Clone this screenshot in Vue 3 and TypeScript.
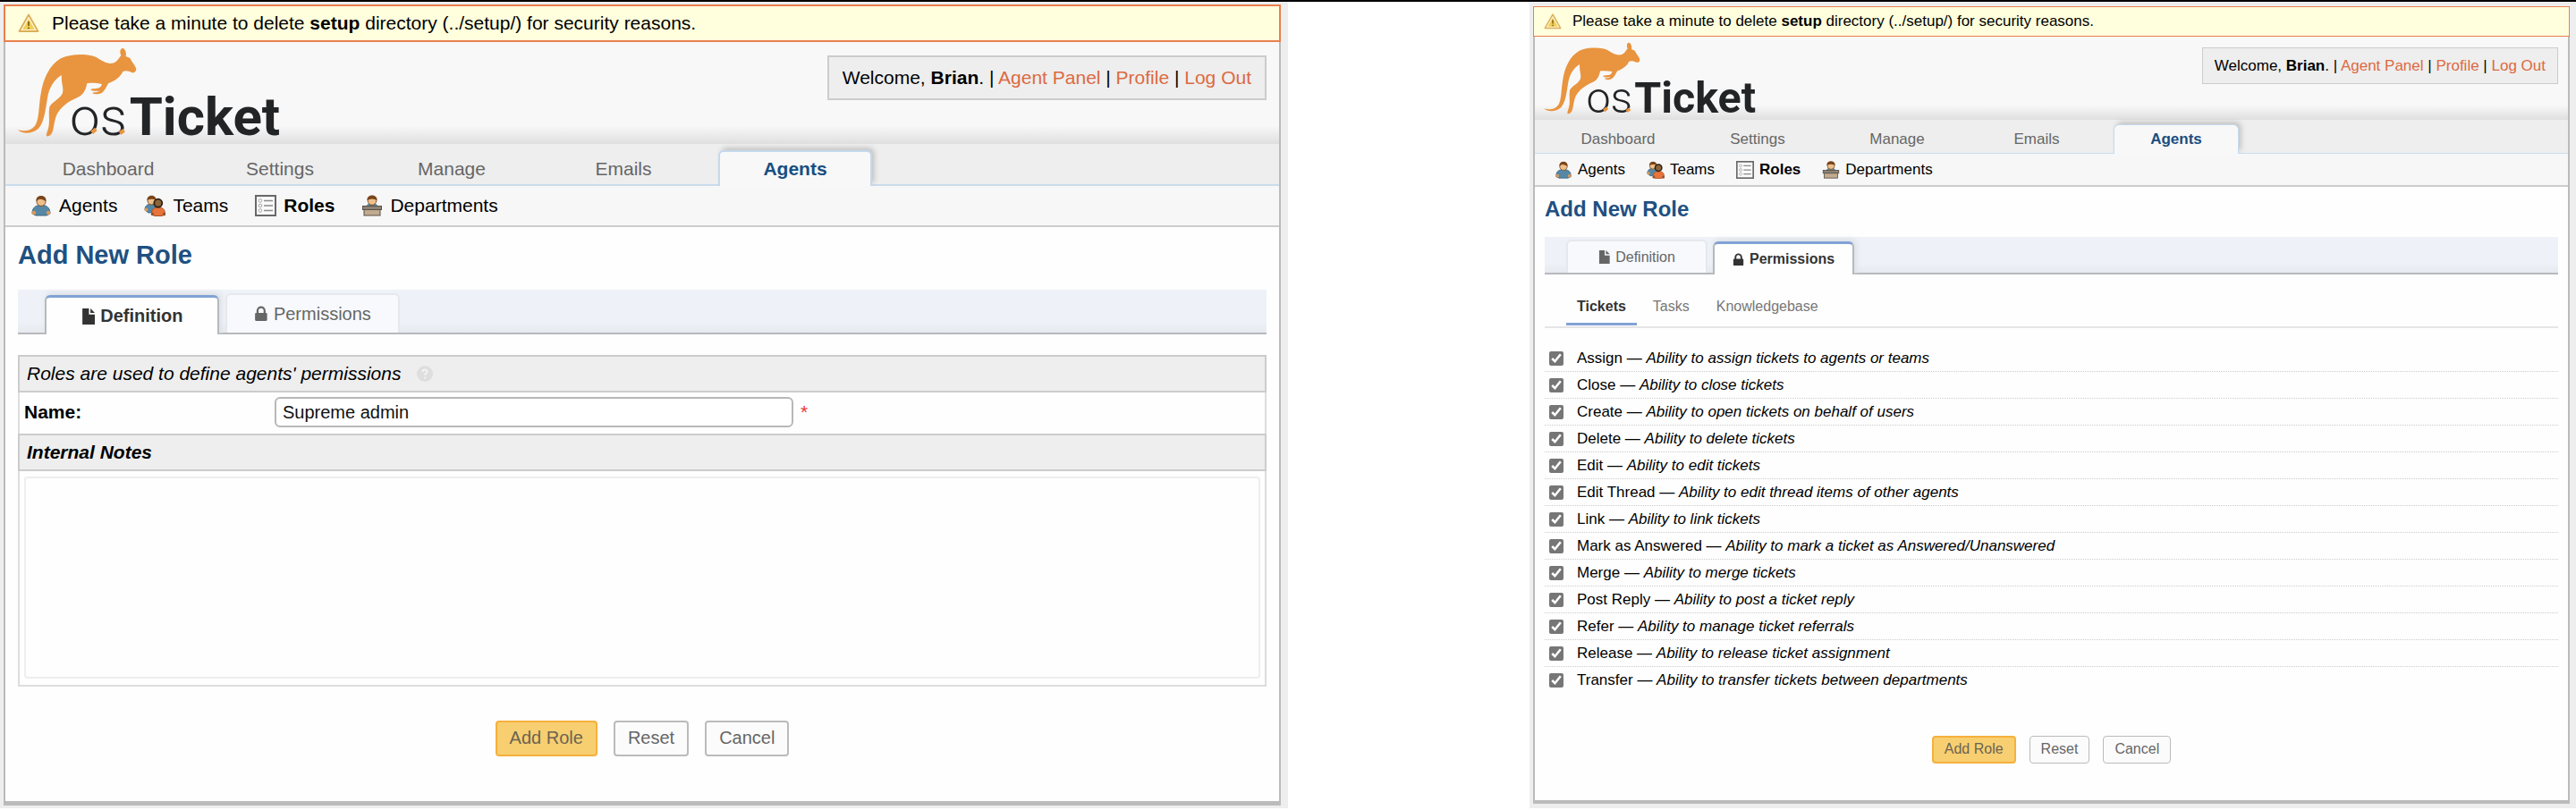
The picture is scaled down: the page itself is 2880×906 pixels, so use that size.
<script setup lang="ts">
import { ref } from 'vue'

type PanelKind = 'definition' | 'permissions'

interface Panel {
  kind: PanelKind
  size: 'large' | 'small'
}

interface Permission {
  id: string
  name: string
  about: string
  granted: boolean
}

const panels: Panel[] = [
  { kind: 'definition', size: 'large' },
  { kind: 'permissions', size: 'small' },
]

const navItems: string[] = ['Dashboard', 'Settings', 'Manage', 'Emails', 'Agents']
const subItems: string[] = ['Agents', 'Teams', 'Roles', 'Departments']
const scopes: string[] = ['Tickets', 'Tasks', 'Knowledgebase']

const roleName = ref('Supreme admin')
const notes = ref('')

const permissions = ref<Permission[]>([
  { id: 'assign', name: 'Assign', about: 'Ability to assign tickets to agents or teams', granted: true },
  { id: 'close', name: 'Close', about: 'Ability to close tickets', granted: true },
  { id: 'create', name: 'Create', about: 'Ability to open tickets on behalf of users', granted: true },
  { id: 'delete', name: 'Delete', about: 'Ability to delete tickets', granted: true },
  { id: 'edit', name: 'Edit', about: 'Ability to edit tickets', granted: true },
  { id: 'thread', name: 'Edit Thread', about: 'Ability to edit thread items of other agents', granted: true },
  { id: 'link', name: 'Link', about: 'Ability to link tickets', granted: true },
  { id: 'answered', name: 'Mark as Answered', about: 'Ability to mark a ticket as Answered/Unanswered', granted: true },
  { id: 'merge', name: 'Merge', about: 'Ability to merge tickets', granted: true },
  { id: 'reply', name: 'Post Reply', about: 'Ability to post a ticket reply', granted: true },
  { id: 'refer', name: 'Refer', about: 'Ability to manage ticket referrals', granted: true },
  { id: 'release', name: 'Release', about: 'Ability to release ticket assignment', granted: true },
  { id: 'transfer', name: 'Transfer', about: 'Ability to transfer tickets between departments', granted: true },
])
</script>

<template>
  <div class="stage">
    <section v-for="panel in panels" :key="panel.kind" class="frame" :class="panel.size">
      <div class="notice">
        <svg class="notice-icon" viewBox="0 0 24 24" aria-hidden="true">
          <path d="M12 2.5 L22.5 21 H1.5 Z" fill="#fff6d8" stroke="#dcae58" stroke-width="1.8" stroke-linejoin="round" />
          <path d="M12 7 L18.800 19 H5.200 Z" fill="#f0cf57" />
          <path d="M12 10 V15 M12 16.500 V18.200" stroke="#8d6f1c" stroke-width="2" />
        </svg>
        <span>Please take a minute to delete <strong>setup</strong> directory (../setup/) for security reasons.</span>
      </div>

      <div class="panel">
        <header class="header">
          <svg class="logo" viewBox="50 40 900 303" role="img" aria-label="osTicket">
            <path
              fill="#e9943f"
              d="M55 317 C80 323 100 320 113 303 C128 282 125 240 133 195 C140 150 160 100 200 77 C240 59 298 62 320 74 C340 87 358 98 378 92 C392 86 395 74 402 68 C396 53 400 44 407 43 C416 44 421 58 418 70 L432 76 C440 92 452 104 453 113 C452 122 445 127 440 125 C427 118 416 117 408 121 C400 140 382 152 360 160 C352 172 350 182 338 192 C326 200 308 197 306 192 C315 190 325 190 330 186 C318 187 302 187 300 181 C310 177 325 180 334 172 L338 163 C320 160 302 158 288 161 C284 180 278 196 262 205 C238 216 212 228 192 256 C178 276 179 300 173 320 C169 335 160 340 152 338 C150 330 158 318 160 300 C163 280 158 260 162 240 C170 222 195 215 205 195 C212 180 200 158 203 133 C180 145 160 175 155 210 C148 250 145 290 125 312 C105 330 72 332 55 317 Z"
            />
            <text class="logo-thin" x="230" y="333">os</text>
            <text class="logo-bold" x="430" y="333">Ticket</text>
            <path d="M304 326 L318 314 M398 328 L412 318" stroke="#e9943f" stroke-width="13" fill="none" />
          </svg>
          <p class="account">
            Welcome, <strong>Brian</strong>. | <a href="#">Agent Panel</a> | <a href="#">Profile</a> |
            <a href="#">Log Out</a>
          </p>
        </header>

        <nav class="nav" aria-label="Main">
          <a v-for="item in navItems" :key="item" href="#" class="nav-item" :class="{ active: item === 'Agents' }">{{ item }}</a>
        </nav>

        <nav class="subnav" aria-label="Agents">
          <a v-for="item in subItems" :key="item" href="#" class="subnav-item" :class="{ active: item === 'Roles' }">
            <svg v-if="item === 'Agents'" class="sub-icon" viewBox="0 0 24 24" aria-hidden="true">
              <path d="M2 21 C2 14 6 11.500 12 11.500 S22 14 22 21 L18 23 H6 Z" fill="#5688a6" stroke="#3d6680" />
              <circle cx="3.800" cy="20" r="2.300" fill="#d99a5b" />
              <circle cx="20.200" cy="20" r="2.300" fill="#d99a5b" />
              <circle cx="12" cy="7.500" r="5" fill="#eebf8c" stroke="#805024" />
              <path d="M6.500 7 C5.500 -1 18.500 -1 17.500 7 C15 6 13 5 11 4.800 C9 5 8 6 6.500 7 Z" fill="#7a4419" />
            </svg>
            <svg v-else-if="item === 'Teams'" class="sub-icon" viewBox="0 0 24 24" aria-hidden="true">
              <path d="M1 17 C1 12 4 10 9 10 S15 13 15 19 L5 20 Z" fill="#5688a6" stroke="#3d6680" />
              <circle cx="2.500" cy="16.500" r="2" fill="#d99a5b" />
              <circle cx="8.500" cy="6.500" r="4.500" fill="#eebf8c" stroke="#805024" />
              <path d="M3.500 6 C3 -1 14 -1 13.500 6 C11 4.500 7 4 3.500 6 Z" fill="#7a4419" />
              <path d="M8.500 22 C8.500 16 11 14 16 14 S23.500 16 23.500 22 L20 23.500 H12 Z" fill="#e8743b" stroke="#b34e20" />
              <circle cx="9.500" cy="21.500" r="1.800" fill="#8a5a33" />
              <circle cx="22.500" cy="21.500" r="1.800" fill="#8a5a33" />
              <circle cx="15.800" cy="9.200" r="4.500" fill="#8c653c" stroke="#2f2012" stroke-width="1.800" />
            </svg>
            <svg v-else-if="item === 'Roles'" class="sub-icon" viewBox="0 0 24 24" aria-hidden="true">
              <rect x="1" y="1" width="22" height="22" fill="#fafafa" stroke="#686868" stroke-width="2" />
              <g fill="none" stroke="#a9a9a9">
                <circle cx="6" cy="6.500" r="1.800" />
                <circle cx="6" cy="12" r="1.800" />
                <circle cx="6" cy="17.500" r="1.800" />
              </g>
              <path d="M10 6.500 H20 M10 12 H20 M10 17.500 H20" stroke="#8b8b8b" stroke-width="1.500" />
            </svg>
            <svg v-else class="sub-icon" viewBox="0 0 24 24" aria-hidden="true">
              <path d="M5.500 14 C6 10 8 9.500 12 9.500 S18 10 18.500 14 Z" fill="#5688a6" />
              <circle cx="12" cy="6.500" r="4.800" fill="#eebf8c" stroke="#805024" />
              <path d="M6.500 6 C5.500 -1.500 18.500 -1.500 17.500 6 C14 4 10 4 6.500 6 Z" fill="#7a4419" />
              <rect x="1.500" y="12.500" width="21" height="4" fill="#8c8375" stroke="#595146" />
              <rect x="3" y="16.500" width="18" height="6.500" fill="#c0ab90" stroke="#595146" />
            </svg>
            <span>{{ item }}</span>
          </a>
        </nav>

        <main class="content">
          <h1 class="title">Add New Role</h1>

          <div class="tabs" role="tablist">
            <button type="button" role="tab" class="tab" :class="{ active: panel.kind === 'definition' }" :aria-selected="panel.kind === 'definition'">
              <svg class="tab-icon" viewBox="0 0 14 16" aria-hidden="true">
                <path d="M1 0 H7.500 V6 H13.500 V16 H1 Z M9 0 L13.500 4.500 H9 Z" fill="currentColor" />
              </svg>
              <span>Definition</span>
            </button>
            <button type="button" role="tab" class="tab" :class="{ active: panel.kind === 'permissions' }" :aria-selected="panel.kind === 'permissions'">
              <svg class="tab-icon" viewBox="0 0 14 16" aria-hidden="true">
                <path d="M3.500 8 V5 A3.500 3.500 0 0 1 10.500 5 V8" fill="none" stroke="currentColor" stroke-width="2" />
                <rect x="1" y="7" width="12" height="8" rx="1" fill="currentColor" />
              </svg>
              <span>Permissions</span>
            </button>
          </div>

          <form @submit.prevent>
            <div v-if="panel.kind === 'definition'" class="definition">
              <div class="section-head">
                <em>Roles are used to define agents' permissions</em>
                <svg class="help" viewBox="0 0 18 18" aria-hidden="true">
                  <circle cx="9" cy="9" r="9" fill="#dedede" />
                  <path d="M6.500 7 C6.500 3.500 11.800 3.800 11.500 7 C11.300 8.800 9 8.800 9 10.800 M9 12.500 V14.500" fill="none" stroke="#f4f4f4" stroke-width="2" />
                </svg>
              </div>
              <div class="field">
                <label class="field-label" for="role-name">Name:</label>
                <input id="role-name" v-model="roleName" class="field-input" type="text" />
                <span class="required">*</span>
              </div>
              <div class="section-head">
                <label for="role-notes"><strong><em>Internal Notes</em></strong></label>
              </div>
              <div class="notes">
                <textarea id="role-notes" v-model="notes" class="notes-input"></textarea>
              </div>
            </div>

            <div v-else class="permissions">
              <div class="scopes" role="tablist">
                <button v-for="scope in scopes" :key="scope" type="button" role="tab" class="scope" :class="{ active: scope === 'Tickets' }">{{ scope }}</button>
              </div>
              <ul class="grants">
                <li v-for="permission in permissions" :key="permission.id" class="grant">
                  <input :id="permission.id" v-model="permission.granted" class="grant-box" type="checkbox" />
                  <label :for="permission.id">{{ permission.name }} — <em>{{ permission.about }}</em></label>
                </li>
              </ul>
            </div>

            <div class="actions">
              <button type="submit" class="button primary">Add Role</button>
              <button type="button" class="button">Reset</button>
              <button type="button" class="button">Cancel</button>
            </div>
          </form>
        </main>
      </div>
    </section>
  </div>
</template>

<style>
body {
  margin: 0;
  background: #fff;
}
</style>

<style scoped>
.stage {
  display: grid;
  grid-template-columns: 1440fr 1170fr;
  column-gap: 9.375%;
  align-items: stretch;
  border-top: 2px solid #000;
  font-family: "Liberation Sans", Arial, sans-serif;
  color: #000;
}

.stage *,
.stage *::before,
.stage *::after {
  box-sizing: border-box;
}

.frame {
  background: #eee;
  font-size: var(--text);
}

.large {
  --text: 21px;
  --text-small: 20px;
  --line: 2px;
  --notice: 42px;
  --header: 114px;
  --logo: 300px;
  --logo-top: 6px;
  --box-top: 15px;
  --box-pad: 15px;
  --box: 50px;
  --nav: 47px;
  --nav-start: 29px;
  --nav-tab: 172px;
  --nav-tab-height: 40px;
  --nav-gap: 20px;
  --subnav: 46px;
  --sub-start: 28px;
  --sub-gap: 30px;
  --icon: 24px;
  --icon-gap: 8px;
  --pad: 14px;
  --title: 29px;
  --title-height: 62px;
  --title-gap: 8px;
  --tabs: 50px;
  --tab: 195px;
  --tab-height: 44px;
  --tab-start: 30px;
  --tab-gap: 7px;
  --actions-top: 38px;
  --actions-bottom: 50px;
  --button: 40px;
  --button-pad: 14px;
  --button-gap: 18px;
  --base: 5px;
  padding: 3px 8px 3px 4px;
}

.small {
  --text: 17px;
  --text-small: 16px;
  --line: 1px;
  --notice: 34px;
  --header: 93px;
  --logo: 242px;
  --logo-top: 6px;
  --box-top: 12px;
  --box-pad: 13px;
  --box: 41px;
  --nav: 38px;
  --nav-start: 23px;
  --nav-tab: 140px;
  --nav-tab-height: 33px;
  --nav-gap: 16px;
  --subnav: 37px;
  --sub-start: 22px;
  --sub-gap: 24px;
  --icon: 20px;
  --icon-gap: 6px;
  --pad: 11px;
  --title: 24px;
  --title-height: 50px;
  --title-gap: 6px;
  --tabs: 42px;
  --tab: 158px;
  --tab-height: 37px;
  --tab-start: 24px;
  --tab-gap: 6px;
  --actions-top: 47px;
  --actions-bottom: 41px;
  --button: 31px;
  --button-pad: 12px;
  --button-gap: 15px;
  --base: 4px;
  padding: 5px 7px 5px 4px;
}

.notice {
  display: flex;
  align-items: center;
  gap: 12px;
  min-height: var(--notice);
  padding-left: var(--pad);
  border: var(--line) solid #e8804f;
  background: #ffffdd;
}

.large .notice {
  gap: 14px;
}

.notice-icon {
  width: var(--icon);
  height: var(--icon);
}

.panel {
  border: solid #bbb;
  border-width: 0 2px var(--base);
  background: #fefefe;
}

.header {
  display: flex;
  justify-content: space-between;
  align-items: flex-start;
  min-height: var(--header);
  padding: 0 var(--pad);
  background: linear-gradient(#f8f8f8 82%, #dfdfdf);
}

.logo {
  width: var(--logo);
  height: auto;
  margin: var(--logo-top) 0 0 -2px;
}

.logo-thin,
.logo-bold {
  font-family: Roboto, "Liberation Sans", sans-serif;
  font-size: 180px;
  fill: #222426;
}

.logo-thin {
  font-weight: 300;
}

.logo-bold {
  font-weight: 700;
}

.account {
  margin: var(--box-top) 0 0;
  padding: 0 var(--box-pad);
  border: var(--line) solid #ccc;
  background: #eee;
  line-height: calc(var(--box) - 2 * var(--line));
}

.account a {
  color: #dc6a41;
  text-decoration: none;
}

.nav {
  display: flex;
  align-items: flex-end;
  gap: var(--nav-gap);
  height: var(--nav);
  padding-left: var(--nav-start);
  background: #eee;
  border-bottom: var(--line) solid #c9dcec;
}

.nav-item {
  display: flex;
  align-items: center;
  justify-content: center;
  width: var(--nav-tab);
  height: var(--nav-tab-height);
  margin-bottom: calc(0px - var(--line));
  border: var(--line) solid transparent;
  border-bottom: 0;
  color: #666;
  text-decoration: none;
}

.nav-item.active {
  border-color: #c5d9ec;
  border-radius: 6px 6px 0 0;
  background: #f8f8f8;
  box-shadow: 3px -3px 6px -1px #bbb;
  clip-path: inset(-10px -10px 0 -10px);
  color: #184e81;
  font-weight: bold;
}

.subnav {
  display: flex;
  align-items: center;
  gap: var(--sub-gap);
  min-height: var(--subnav);
  padding-left: var(--sub-start);
  border-bottom: 2px solid #ccc;
  background: #f7f7f7;
}

.subnav-item {
  display: flex;
  align-items: center;
  gap: var(--icon-gap);
  color: #000;
  text-decoration: none;
}

.subnav-item.active {
  font-weight: bold;
}

.sub-icon {
  width: var(--icon);
  height: var(--icon);
}

.content {
  padding: 0 var(--pad);
}

.title {
  margin: 0 0 var(--title-gap);
  color: #205081;
  font-size: var(--title);
  line-height: var(--title-height);
}

.tabs {
  display: flex;
  align-items: flex-end;
  gap: var(--tab-gap);
  height: var(--tabs);
  padding-left: var(--tab-start);
  border-bottom: 2px solid #b6b9bc;
  background: linear-gradient(#eef2f8 75%, #e6eaef);
}

.tab {
  display: flex;
  align-items: center;
  justify-content: center;
  gap: 6px;
  width: var(--tab);
  height: var(--tab-height);
  padding: 0;
  border: 2px solid #e5e8ec;
  border-bottom: 0;
  border-radius: 6px 6px 0 0;
  background: #f7f9fc;
  color: #666;
  font-family: inherit;
  font-size: var(--text-small);
}

.tab.active {
  margin-bottom: -2px;
  border-color: #b6b9bc;
  border-top: 3px solid #81a3d6;
  background: #fefefe;
  box-shadow: 2px -2px 6px #d9dde2;
  clip-path: inset(-10px -10px 0 -10px);
  color: #333;
  font-weight: bold;
}

.tab-icon {
  height: 15px;
}

.large .tab-icon {
  height: 18px;
}

.definition {
  margin-top: 23px;
  border: 2px solid #ddd;
}

.section-head {
  display: flex;
  align-items: center;
  gap: 18px;
  min-height: 42px;
  margin: -2px;
  padding: 0 8px;
  border: 2px solid #ccc;
  background: #eee;
}

.help {
  width: 18px;
  height: 18px;
}

.field {
  display: flex;
  align-items: center;
  min-height: 50px;
  padding: 0 5px 2px;
}

.field-label {
  width: 280px;
  font-weight: bold;
}

.field-input {
  width: 580px;
  height: 34px;
  padding: 0 7px;
  border: 2px solid #b8b8b8;
  border-radius: 6px;
  background: #fff;
  color: #111;
  font-family: inherit;
  font-size: var(--text-small);
}

.required {
  margin-left: 8px;
  color: #e33;
}

.notes {
  padding: 8px 5px 7px;
}

.notes-input {
  display: block;
  width: 100%;
  height: 226px;
  border: 2px solid #eee;
  border-radius: 4px;
  background: #fefefe;
  font-family: inherit;
  font-size: var(--text-small);
  resize: none;
}

.scopes {
  display: flex;
  align-items: flex-end;
  gap: 6px;
  min-height: 60px;
  padding: 0 0 1px 24px;
  border-bottom: 2px solid #e5e5e5;
}

.scope {
  height: 43px;
  padding: 3px 12px 0;
  border: 0;
  border-bottom: 3px solid transparent;
  background: none;
  color: #777;
  font-family: inherit;
  font-size: var(--text-small);
}

.scope.active {
  border-bottom-color: #81a3d6;
  color: #333;
  font-weight: bold;
}

.grants {
  margin: 19px 0 0;
  padding: 0;
  list-style: none;
}

.grant {
  display: flex;
  align-items: center;
  gap: 15px;
  min-height: 30px;
  padding-left: 5px;
  border-bottom: 1px dotted #ccc;
}

.grant:last-child {
  border-bottom: 0;
}

.grant-box {
  width: 16px;
  height: 16px;
  margin: 0;
  accent-color: #767676;
}

.actions {
  display: flex;
  justify-content: center;
  gap: var(--button-gap);
  padding: var(--actions-top) 0 var(--actions-bottom);
}

.button {
  height: var(--button);
  padding: 0 var(--button-pad) 1px;
  border: var(--line) solid #bbb;
  border-radius: 4px;
  background: #fbfbfb;
  color: #666;
  font-family: inherit;
  font-size: var(--text-small);
}

.button.primary {
  border: 2px solid #f5b03c;
  background: #f8cf70;
  color: #6b6453;
}
</style>
